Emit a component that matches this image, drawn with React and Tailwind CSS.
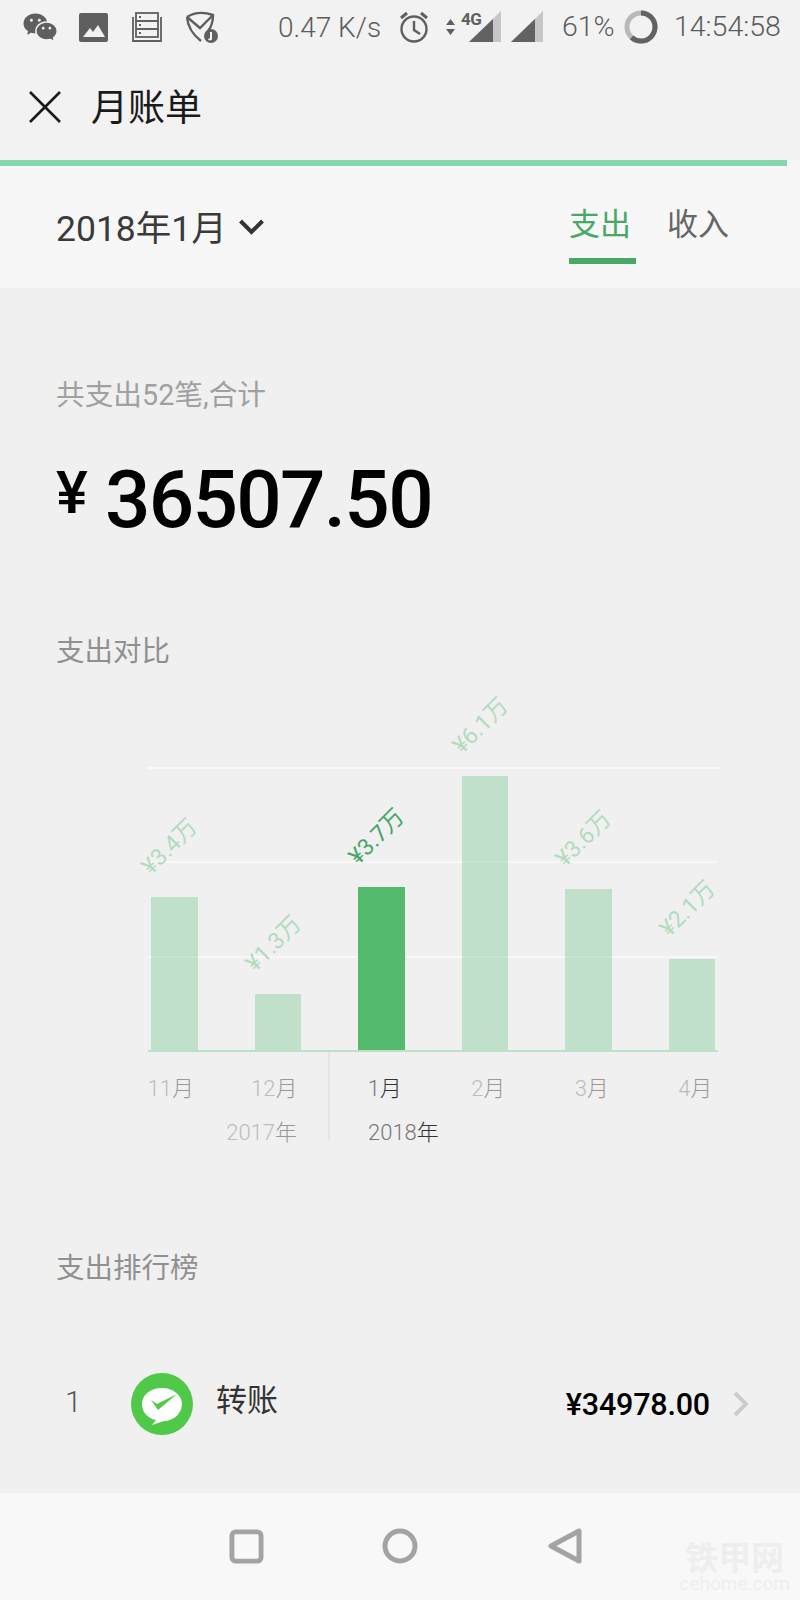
import { RiWechatFill } from "react-icons/ri";

const SANS = "font-['Roboto','Noto_Sans_CJK_SC',sans-serif]";

const bars = [
  { label: "¥3.4万", height: 153 },
  { label: "¥1.3万", height: 56 },
  { label: "¥3.7万", height: 163, active: true },
  { label: "¥6.1万", height: 274 },
  { label: "¥3.6万", height: 161 },
  { label: "¥2.1万", height: 91 },
];

function Signal({ className }) {
  return (
    <svg viewBox="0 0 32 32" className={className}>
      <path d="M0 31 L32 0 V31 Z" fill="#c6c6c6" />
      <path d="M0 31 L24 8 V31 Z" fill="#626262" />
    </svg>
  );
}

function StatusBar() {
  return (
    <div className="flex h-[54px] items-center pl-[22px] text-[28.5px] leading-none text-[#5c5c5c]">
      {/* wechat */}
      <RiWechatFill className="h-[36px] w-[36px] text-[#5f5f5f]" />
      <svg viewBox="0 0 29 29" className="ml-[21px] h-[29px] w-[29px]">
        <rect width="29" height="29" rx="2" fill="#5f5f5f" />
        <path d="M4 24 L11 15 L14 19 L19 12 L26 24 Z" fill="#f2f2f2" />
      </svg>
      <svg viewBox="0 0 30 30" fill="none" stroke="#5f5f5f" strokeWidth="1.8" className="ml-[24px] h-[30px] w-[30px]">
        <rect x="4" y="1" width="22" height="8" />
        <rect x="4" y="9" width="22" height="8" />
        <rect x="4" y="17" width="22" height="8" />
        <path d="M1 5 V29 H29 V5" />
        <path d="M7 5 H9 M7 13 H9 M7 21 H9" strokeWidth="2" />
      </svg>
      <svg viewBox="0 0 33 32" className="ml-[23px] h-[32px] w-[33px]">
        <path d="M2 6 Q13 -1 28 4 Q28 14 23 20 M2 6 Q3 20 16 30 M2 6 L15 17 L28 4" fill="none" stroke="#5f5f5f" strokeWidth="2.4" />
        <circle cx="26" cy="25" r="7" fill="#5f5f5f" />
        <path d="M26 21 V28 Q25 29 23.5 28" fill="none" stroke="#f2f2f2" strokeWidth="2" />
      </svg>
      <div className={`${SANS} mt-[1px] ml-[60px] w-[101px] text-[28px] whitespace-nowrap font-light`}>0.47 K/s</div>
      <svg viewBox="0 0 30 32" fill="none" stroke="#5f5f5f" strokeWidth="2.4" className="ml-[20px] h-[32px] w-[30px]">
        <circle cx="15" cy="18" r="12.5" />
        <path d="M15 10 V19 L21 23" />
        <path d="M2 7 L8 2 M28 7 L22 2" strokeWidth="3" />
      </svg>
      <svg viewBox="0 0 9 16" fill="#5f5f5f" className="ml-[17px] h-[16px] w-[9px]">
        <path d="M4.5 0 L9 6 H0 Z M0 10 H9 L4.5 16 Z" />
      </svg>
      <div className="relative ml-[14px] h-[32px] w-[32px]">
        <Signal className="h-[32px] w-[32px]" />
        <span className="absolute -left-[8px] top-[0px] font-['Roboto'] text-[17px] leading-[16px] font-bold tracking-tight text-[#5f5f5f]">4G</span>
      </div>
      <Signal className="ml-[10px] h-[32px] w-[32px]" />
      <div className={`${SANS} mt-[1px] ml-[19px] w-[55px] whitespace-nowrap font-light`}>61%</div>
      <svg viewBox="0 0 34 34" fill="none" strokeWidth="5" className="ml-[7px] h-[34px] w-[34px] -rotate-90">
        <circle cx="17" cy="17" r="14" stroke="#b9b9b9" />
        <circle cx="17" cy="17" r="14" stroke="#626262" strokeDasharray="54 88" />
      </svg>
      <div className={`${SANS} mt-[1px] ml-[16px] whitespace-nowrap font-light`}>14:54:58</div>
    </div>
  );
}

function MonthLabel({ num, unit = "月", dim = true }) {
  return (
    <div className="w-[103.5px] text-center text-[22px] leading-[30px] font-light">
      <span className={dim ? "text-[#bcbcbc]" : "text-[#777777]"}>{num}</span>
      <span className={dim ? "text-[#999999]" : "text-[#333333]"}>{unit}</span>
    </div>
  );
}

function Chart() {
  return (
    <div>
      <div className="relative mt-[95px] ml-[148px] h-[285px] w-[570px] border-b-2 border-[#bfe0c8]">
        {/* grid lines sit behind the translucent bars */}
        <div className="absolute top-0 right-0 left-0 h-[2px] bg-[#f8f8f8]" />
        <div className="absolute top-[94px] right-0 left-0 h-[2px] bg-[#f8f8f8]" />
        <div className="absolute top-[189px] right-0 left-0 h-[2px] bg-[#f8f8f8]" />
        <div className="relative flex h-full items-end justify-between px-[3px]">
          {bars.map((b) => (
            <div
              key={b.label}
              className={`relative w-[46.5px] ${b.active ? "bg-[#54bb6e]" : "bg-[#57bc70]/30"}`}
              style={{ height: b.height }}
            >
              <span
                className={`absolute top-[-65px] left-[-27px] w-[92px] -rotate-45 text-center text-[23px] leading-[30px] whitespace-nowrap ${
                  b.active ? "text-[#45a565]" : "text-[#b2dbbe]"
                }`}
              >
                {b.label}
              </span>
            </div>
          ))}
        </div>
      </div>
      <div className="flex">
        <div className="ml-[119px] h-[88px] w-[211px] border-r-2 border-[#e4e4e4] pt-[22px]">
          <div className="flex">
            <MonthLabel num="11" />
            <MonthLabel num="12" />
          </div>
          <div className="mt-[14px] pr-[31px] text-right text-[22px] leading-[30px] font-light">
            <span className="text-[#bcbcbc]">2017</span>
            <span className="text-[#999999]">年</span>
          </div>
        </div>
        <div className="pt-[22px] pl-[3px]">
          <div className="flex">
            <MonthLabel num="1" dim={false} />
            <MonthLabel num="2" />
            <MonthLabel num="3" />
            <MonthLabel num="4" />
          </div>
          <div className="mt-[14px] pl-[35px] text-[22px] leading-[30px] font-light">
            <span className="text-[#777777]">2018</span>
            <span className="text-[#333333]">年</span>
          </div>
        </div>
      </div>
    </div>
  );
}

export default function App() {
  return (
    <div className={`${SANS} flex h-[1600px] w-[800px] flex-col overflow-hidden bg-[#f0f0f0]`}>
      <div className="h-[160px] bg-[#f2f2f2]">
        <StatusBar />
        <div className="flex h-[106px] items-center pl-[29px]">
          <svg viewBox="0 0 32 32" fill="none" stroke="#1a1a1a" strokeWidth="2.6" className="h-[32px] w-[32px]">
            <path d="M1 1 L31 31 M31 1 L1 31" />
          </svg>
          <div className="mt-[2px] ml-[30px] text-[37px] leading-none text-[#1a1a1a]">月账单</div>
        </div>
      </div>

      {/* load progress */}
      <div className="h-[6px] bg-[#f7f7f7]">
        <div className="h-full w-[787px] bg-[#86d7ab]" />
      </div>

      <div className="flex h-[122px] items-center bg-[#f7f7f7] pl-[56px]">
        <div className="mt-[4px] text-[35.5px] leading-[40px] text-[#3a3a3a]">2018年1月</div>
        <svg viewBox="0 0 25 16" fill="none" stroke="#333333" strokeWidth="4" className="ml-[12px] h-[16px] w-[25px]">
          <path d="M1.5 2 L12.5 13 L23.5 2" />
        </svg>
        <div className="ml-auto flex h-full">
          <div className="mr-[31px] flex h-full w-[67px] flex-col items-start pt-[40px]">
            <div className="text-[31px] leading-[38px] text-[#4aa866]">支出</div>
            <div className="mt-[14px] h-[6px] w-full bg-[#4aa866]" />
          </div>
          <div className="mr-[71px] pt-[40px] text-[31px] leading-[38px] text-[#666666]">收入</div>
        </div>
      </div>

      <div className="flex-1 pt-[87px]">
        <div className="pl-[56px] text-[28.7px] leading-[40px] text-[#a0a0a0]">共支出52笔,合计</div>
        <div className="mt-[38px] flex h-[90px] items-center pl-[56px] font-medium text-black">
          <span className="mb-[10px] w-[33px] text-[60px] leading-none">¥</span>
          <span className="mt-[3px] ml-[16px] text-[80px] leading-none tracking-[-1.7px]">36507.50</span>
        </div>

        <div className="mt-[89px] pl-[56px] text-[28.5px] leading-[40px] text-[#909090]">支出对比</div>
        <Chart />

        <div className="mt-[101px] pl-[56px] text-[28.5px] leading-[40px] text-[#909090]">支出排行榜</div>

        <div className="mt-[83px] flex h-[63px] items-center">
          <div className="mb-[4px] ml-[65px] w-[66px] text-[30px] font-light text-[#555555]">1</div>
          <svg viewBox="0 0 62 62" className="h-[62px] w-[62px]">
            <circle cx="31" cy="31" r="31" fill="#50c848" />
            <path d="M31 15 C19 15 11 22 11 31 C11 40 18 46 25 47 L21 52 L33 48 C43 48 51 40 51 31 C51 22 42 15 31 15 Z" fill="#ffffff" />
            <path d="M20 27 L26 31 L46 21 L27 37 Z" fill="#50c848" />
          </svg>
          <div className="mb-[4px] ml-[23px] text-[31px] text-[#333333]">转账</div>
          <div className="mt-[2px] ml-auto text-[30.5px] tracking-[-0.2px] font-medium text-black">¥34978.00</div>
          <svg viewBox="0 0 16 26" fill="none" stroke="#cccccc" strokeWidth="4" className="mr-[51px] ml-[23px] h-[26px] w-[16px]">
            <path d="M2 2 L13 13 L2 24" />
          </svg>
        </div>
      </div>

      <div className="relative flex h-[107px] items-center bg-[#f8f8f8] pb-[1px] pl-[229px]">
        <svg viewBox="0 0 36 36" fill="none" stroke="#a3a3a3" strokeWidth="5" className="h-[35px] w-[35px]">
          <rect x="3" y="3" width="30" height="30" rx="4" />
        </svg>
        <svg viewBox="0 0 36 36" fill="none" stroke="#a3a3a3" strokeWidth="5" className="ml-[118px] h-[36px] w-[36px]">
          <circle cx="18" cy="18" r="15" />
        </svg>
        <svg viewBox="0 0 34 36" fill="none" stroke="#a3a3a3" strokeWidth="5" strokeLinejoin="round" className="ml-[130px] h-[36px] w-[34px]">
          <path d="M31 3 V33 L3 18 Z" />
        </svg>
        {/* watermark */}
        <div className="absolute top-[50px] right-[10px] text-center text-[#eeeeee]">
          <div className="text-[33px] leading-[31px] font-bold">铁甲网</div>
          <div className="mt-[3px] text-[19px] leading-[14px]">cehome.com</div>
        </div>
      </div>
    </div>
  );
}
